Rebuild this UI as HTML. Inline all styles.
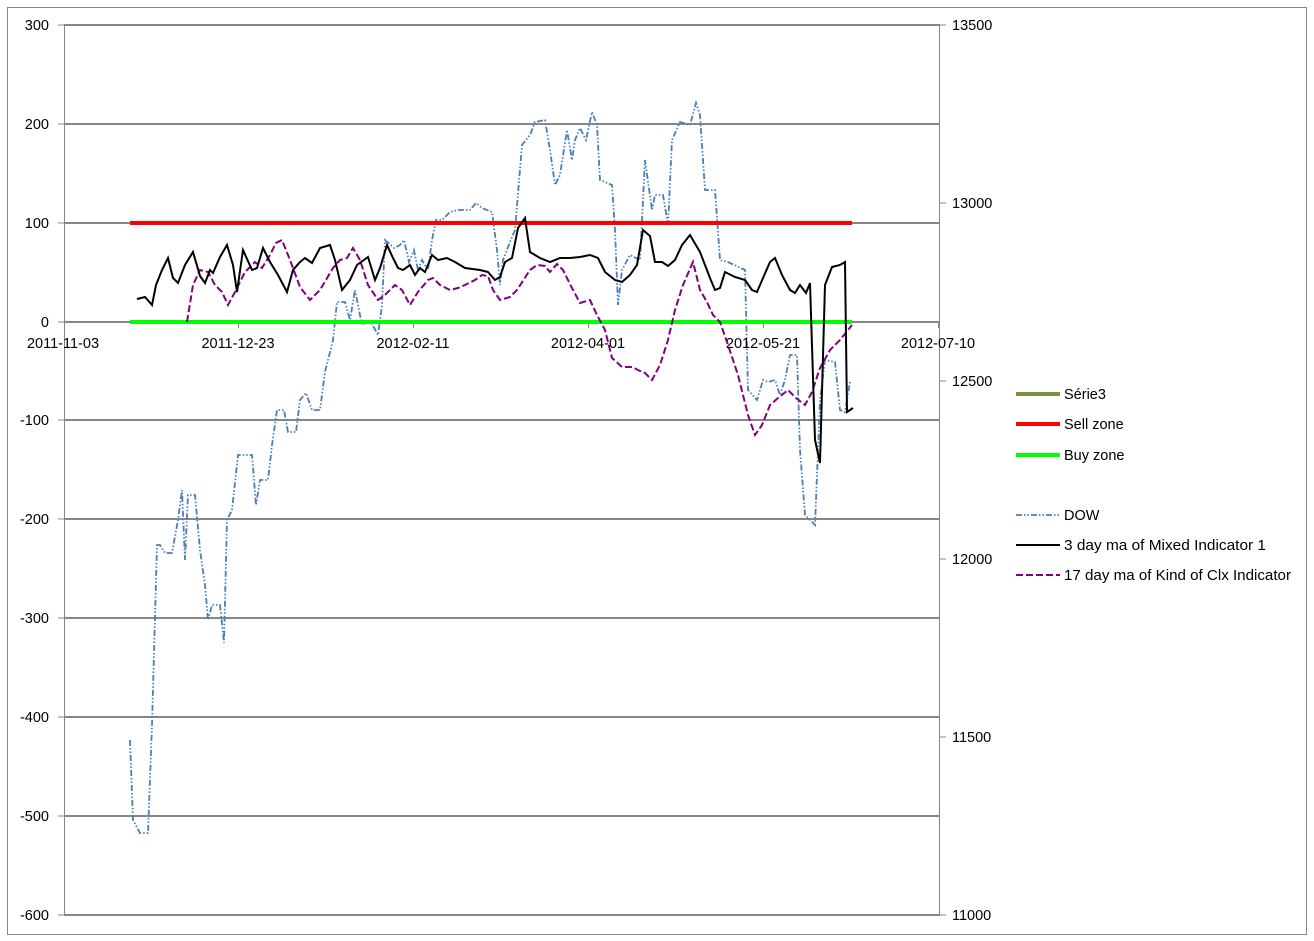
<!DOCTYPE html>
<html><head><meta charset="utf-8"><style>
html,body{margin:0;padding:0;background:#fff;}
svg{display:block;font-family:"Liberation Sans",sans-serif;}
</style></head><body>
<svg width="1314" height="941" viewBox="0 0 1314 941" xmlns="http://www.w3.org/2000/svg">
<rect x="0" y="0" width="1314" height="941" fill="#fff"/>
<rect x="7.5" y="7.5" width="1299" height="927" fill="none" stroke="#888" stroke-width="1"/>
<g stroke="#868686" stroke-width="2">
<line x1="64" y1="25" x2="940" y2="25"/>
<line x1="64" y1="124" x2="940" y2="124"/>
<line x1="64" y1="223" x2="940" y2="223"/>
<line x1="64" y1="322" x2="940" y2="322"/>
<line x1="64" y1="420" x2="940" y2="420"/>
<line x1="64" y1="519" x2="940" y2="519"/>
<line x1="64" y1="618" x2="940" y2="618"/>
<line x1="64" y1="717" x2="940" y2="717"/>
<line x1="64" y1="816" x2="940" y2="816"/>
<line x1="64" y1="915" x2="940" y2="915"/>
</g>
<g stroke="#868686" stroke-width="1">
<line x1="64.5" y1="25" x2="64.5" y2="915"/>
<line x1="939.5" y1="25" x2="939.5" y2="915"/>
<line x1="58" y1="25" x2="64" y2="25"/><line x1="58" y1="124" x2="64" y2="124"/><line x1="58" y1="223" x2="64" y2="223"/><line x1="58" y1="322" x2="64" y2="322"/><line x1="58" y1="420" x2="64" y2="420"/><line x1="58" y1="519" x2="64" y2="519"/><line x1="58" y1="618" x2="64" y2="618"/><line x1="58" y1="717" x2="64" y2="717"/><line x1="58" y1="816" x2="64" y2="816"/><line x1="58" y1="915" x2="64" y2="915"/>
<line x1="940" y1="25" x2="946" y2="25"/><line x1="940" y1="203" x2="946" y2="203"/><line x1="940" y1="381" x2="946" y2="381"/><line x1="940" y1="559" x2="946" y2="559"/><line x1="940" y1="737" x2="946" y2="737"/><line x1="940" y1="915" x2="946" y2="915"/>
<line x1="238.5" y1="322" x2="238.5" y2="328"/><line x1="413.5" y1="322" x2="413.5" y2="328"/><line x1="588.5" y1="322" x2="588.5" y2="328"/><line x1="763.5" y1="322" x2="763.5" y2="328"/><line x1="938.5" y1="322" x2="938.5" y2="328"/>
</g>
<g font-size="14.5" fill="#000" text-anchor="end">
<text x="49" y="30">300</text><text x="49" y="129">200</text><text x="49" y="228">100</text><text x="49" y="327">0</text><text x="49" y="425">-100</text><text x="49" y="524">-200</text><text x="49" y="623">-300</text><text x="49" y="722">-400</text><text x="49" y="821">-500</text><text x="49" y="920">-600</text>
</g>
<g font-size="14.5" fill="#000">
<text x="952" y="30">13500</text><text x="952" y="208">13000</text><text x="952" y="386">12500</text><text x="952" y="564">12000</text><text x="952" y="742">11500</text><text x="952" y="920">11000</text>
</g>
<polyline fill="none" stroke="#4a7ebb" stroke-width="1.8" stroke-dasharray="6,2,1.5,2,1.5,2" points="130,740 133,820 140,833 148,833 152,725 157,545 160,545 165,553 172,553 178,520 182,490 185,560 188,495 195,495 200,550 205,585 208,620 212,605 220,605 224,643 227,520 232,510 238,455 252,455 256,505 260,480 268,480 272,445 277,410 284,410 288,432 296,432 300,400 306,393 312,410 320,410 325,372 333,340 337,302 345,302 350,320 355,290 362,325 370,320 378,335 382,305 385,240 394,248 400,245 404,240 409,262 414,250 418,270 422,260 428,270 432,240 436,220 442,220 450,212 458,210 470,210 476,203 482,208 492,212 497,250 500,285 503,260 510,242 515,230 522,145 530,135 535,122 545,120 550,150 555,185 560,175 567,130 572,160 575,140 580,128 586,140 592,112 597,125 600,180 612,185 615,230 618,305 622,270 630,255 640,260 645,160 652,210 655,195 663,195 668,225 672,140 680,122 690,125 696,103 700,115 705,190 715,190 720,260 728,262 745,270 748,390 757,400 763,380 768,382 775,380 780,395 785,380 790,355 797,355 800,450 805,515 815,525 820,400 825,360 835,362 840,410 845,412 850,382"/>
<line x1="130" y1="223" x2="852" y2="223" stroke="#ff0000" stroke-width="4"/>
<line x1="130" y1="322" x2="852" y2="322" stroke="#00ff00" stroke-width="4"/>
<polyline fill="none" stroke="#800080" stroke-width="2" stroke-dasharray="7,3" points="187,322 193,285 200,270 208,272 215,285 222,292 228,305 235,292 240,282 245,272 255,262 262,268 270,255 276,243 282,240 290,260 300,287 310,300 320,290 333,268 340,260 347,258 353,248 360,260 368,285 378,300 385,295 395,285 402,290 410,305 418,292 428,280 433,278 440,285 450,290 458,288 465,285 475,280 482,275 488,276 493,290 500,300 510,297 517,290 530,270 537,265 545,266 550,272 557,264 563,270 572,288 580,303 590,300 597,315 605,330 612,358 622,367 632,367 638,370 645,373 652,380 660,365 668,340 675,310 683,285 693,262 700,290 707,302 713,315 720,322 727,342 738,375 748,415 755,435 762,425 770,405 778,398 788,390 796,398 805,405 812,392 820,368 830,350 840,340 848,330 852,325"/>
<polyline fill="none" stroke="#000" stroke-width="2" points="137,299 145,297 152,305 156,285 162,270 168,258 173,278 178,283 185,265 193,252 200,276 205,283 210,270 213,273 220,257 227,245 233,265 237,292 243,250 252,270 257,268 263,248 270,262 278,275 287,292 293,270 300,262 305,258 312,263 320,248 330,245 335,260 342,290 350,280 357,265 368,257 375,280 380,268 387,245 393,258 398,268 403,270 410,265 415,275 420,268 425,272 432,255 438,260 447,258 455,262 465,268 480,270 488,272 495,280 500,277 505,262 512,258 518,228 525,218 530,252 540,258 550,262 560,258 570,258 580,257 590,255 598,258 605,272 615,280 622,282 630,275 637,265 643,230 650,236 655,262 662,262 668,266 675,260 682,245 690,235 700,252 710,278 715,290 720,288 725,272 735,277 745,280 752,290 757,292 763,278 770,262 775,258 782,275 790,290 795,293 800,285 806,293 810,283 815,440 820,463 825,285 832,267 840,265 845,262 847,412 853,408"/>
<g font-size="14.5" fill="#000" text-anchor="middle">
<text x="63" y="348">2011-11-03</text><text x="238" y="348">2011-12-23</text><text x="413" y="348">2012-02-11</text><text x="588" y="348">2012-04-01</text><text x="763" y="348">2012-05-21</text><text x="938" y="348">2012-07-10</text>
</g>
<line x1="1016" y1="394" x2="1060" y2="394" stroke="#77933c" stroke-width="4"/>
<line x1="1016" y1="424" x2="1060" y2="424" stroke="#ff0000" stroke-width="4"/>
<line x1="1016" y1="455" x2="1060" y2="455" stroke="#00ff00" stroke-width="4"/>
<line x1="1016" y1="515" x2="1060" y2="515" stroke="#4a7ebb" stroke-width="1.8" stroke-dasharray="6,2,1.5,2,1.5,2"/>
<line x1="1016" y1="545" x2="1060" y2="545" stroke="#000" stroke-width="2"/>
<line x1="1016" y1="575" x2="1060" y2="575" stroke="#800080" stroke-width="2" stroke-dasharray="7,3"/>
<g font-size="14.5" fill="#000">
<text x="1064" y="399">Série3</text>
<text x="1064" y="429">Sell zone</text>
<text x="1064" y="460">Buy zone</text>
<text x="1064" y="520">DOW</text>
<text x="1064" y="550" textLength="202" lengthAdjust="spacingAndGlyphs">3 day ma of Mixed Indicator 1</text>
<text x="1064" y="580" textLength="227" lengthAdjust="spacingAndGlyphs">17 day ma of Kind of Clx Indicator</text>
</g>
</svg>
</body></html>
